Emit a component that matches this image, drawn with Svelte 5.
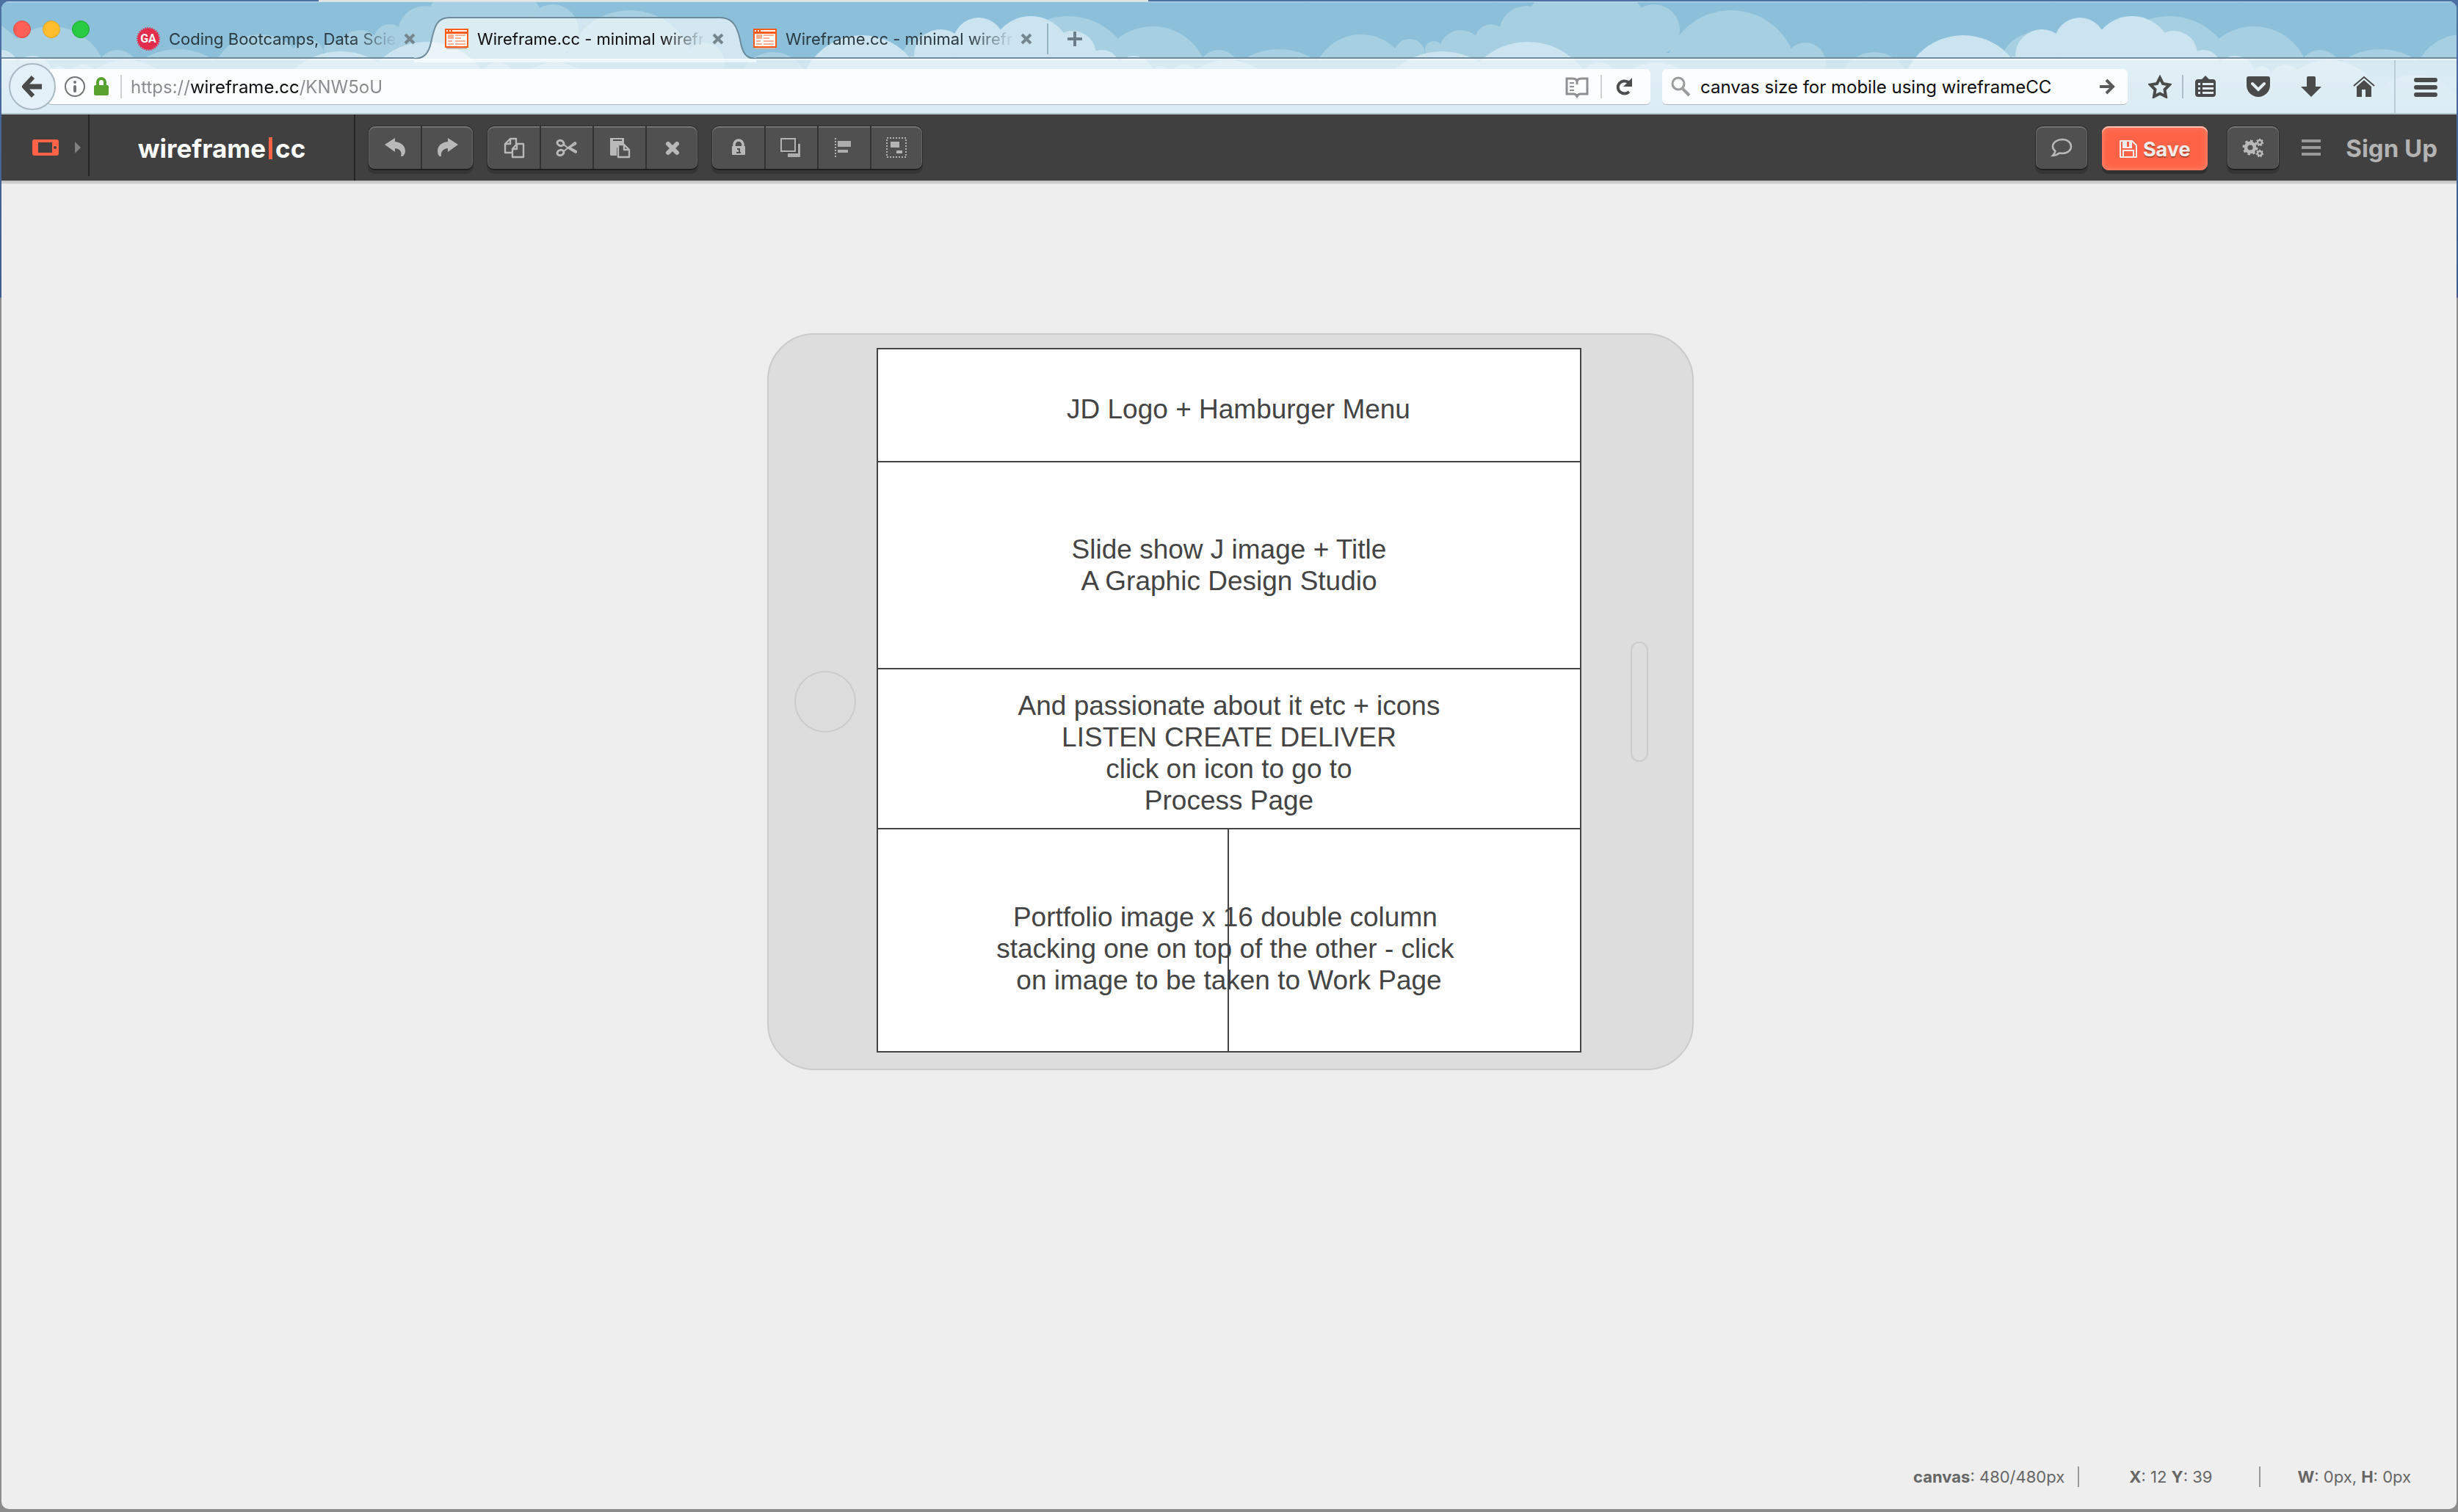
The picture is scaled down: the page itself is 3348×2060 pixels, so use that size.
<script>
  const tabs = [
    { title: 'Coding Bootcamps, Data Scie', icon: 'ga', active: false },
    { title: 'Wireframe.cc - minimal wirefr', icon: 'wire', active: true },
    { title: 'Wireframe.cc - minimal wirefr', icon: 'wire', active: false }
  ];

  // The sky repeats every 1500 units: [cx, cy, r] for each puff.
  const skyOffsets = [-3000, -1500, 0, 1500];
  const backPuffs = [
    [1742, 156, 91], [1854, 111, 66], [1920, 72, 21], [1953, 66, 12],
    [1990, 69, 30], [2031, 53, 22], [2079, 43, 37], [2160, 58, 90],
    [2253, 39, 35], [2358, 102, 90], [2459, 84, 28], [2553, 117, 48],
    [2770, 88, 45], [2955, 110, 90], [3070, 110, 76], [3160, 94, 28]
  ];
  const frontPuffs = [
    [1964, 163, 95], [2081, 148, 93], [2178, 108, 25], [2256, 143, 60],
    [2674, 131, 85], [2781, 74, 36], [2833, 57, 35], [2904, 75, 55],
    [2961, 72, 32], [3001, 90, 24], [3044, 102, 28], [3081, 100, 12],
    [3113, 108, 22], [3172, 158, 78], [3290, 170, 70]
  ];

  const editGroups = [
    [['undo', 'Undo'], ['redo', 'Redo']],
    [['copy', 'Copy'], ['cut', 'Cut'], ['paste', 'Paste'], ['remove', 'Delete']],
    [['lock', 'Lock'], ['layers', 'Arrange'], ['align', 'Align'], ['group', 'Group']]
  ];

  let search = $state('canvas size for mobile using wireframeCC');
  let address = $state('https://wireframe.cc/KNW5oU');

  // The host part of the address is darker than the rest: find where it starts and ends.
  const pen = document.createElement('canvas').getContext('2d');
  pen.font = '24px Inter, "Liberation Sans", sans-serif';
  const host = $derived.by(() => {
    const scheme = address.match(/^\w+:\/\//)?.[0] ?? '';
    const full = scheme + address.slice(scheme.length).split('/')[0];
    return { from: Math.round(pen.measureText(scheme).width), to: Math.round(pen.measureText(full).width) };
  });
</script>

{#snippet toolIcon(name)}
  <svg class="tool-icon" viewBox="0 0 32 32" aria-hidden="true">
    {#if name === 'undo'}
      <path d="M2 12 16 3v5c9 1 14 6 14 13 0 3-2 6-4 7h-2c2-6-1-10-8-11v5z" fill="#b9b9b9" />
    {:else if name === 'redo'}
      <path d="M30 12 16 3v5C7 9 2 14 2 21c0 3 1 6 3 7h2c-1-6 2-10 9-11v5z" fill="#b9b9b9" />
    {:else if name === 'copy'}
      <g fill="none" stroke="#b9b9b9" stroke-width="2.4" stroke-linejoin="round">
        <path d="M13 23H4V11l7-7h8v7M11 4v7H4" />
        <path d="M14 29V18l6-7h9v18zM20 11v7h-6" fill="#505050" />
      </g>
    {:else if name === 'cut'}
      <g fill="none" stroke="#b9b9b9">
        <ellipse cx="7.500" cy="10" rx="4.500" ry="3.500" stroke-width="3" transform="rotate(20 7.500 10)" />
        <ellipse cx="7.500" cy="23" rx="4.500" ry="3.500" stroke-width="3" transform="rotate(-20 7.500 23)" />
        <path d="m12 12 6 5 10 6c2-1 1-2 0-2.500L18 15M12 21l5-4L27 9c2 1 2 2 0 3l-9 5" stroke-width="2" stroke-linejoin="round" />
      </g>
    {:else if name === 'paste'}
      <path d="M3 3h19v8l-7 2-3 4v10H4l-1-1z" fill="#b9b9b9" />
      <path d="M7 6h12" stroke="#505050" stroke-width="2" />
      <path d="M14 29V12h8l7 7v10zM22 12v7h7" fill="#505050" stroke="#b9b9b9" stroke-width="2.400" stroke-linejoin="round" />
    {:else if name === 'remove'}
      <path d="m10 11 12 12M22 11 10 23" stroke="#b9b9b9" stroke-width="6" stroke-linecap="round" />
    {:else if name === 'lock'}
      <path d="M10 16v-4a6 6 0 0 1 12 0v4" fill="none" stroke="#b9b9b9" stroke-width="3.500" />
      <rect x="7" y="14" width="18" height="12" rx="1" fill="#b9b9b9" />
      <path d="M14 18h3v5M13 23h6" stroke="#505050" stroke-width="2" fill="none" />
    {:else if name === 'layers'}
      <path d="M11 21h17v8H11zM20 11h8v18h-8z" fill="#adadad" />
      <path d="M5 5h20v19H5z" fill="#454545" />
      <path d="M2 4h19v17H2z" fill="#505050" stroke="#b3b3b3" stroke-width="2" />
    {:else if name === 'align'}
      <path d="M4 3v27" stroke="#b3b3b3" stroke-width="2" stroke-dasharray="2 2" />
      <path d="M7 7h18v8H7zM7 19h14v4H7z" fill="#adadad" />
    {:else if name === 'group'}
      <path d="M2 3h26v26H2z" fill="none" stroke="#b3b3b3" stroke-width="2" stroke-dasharray="2 2" />
      <path d="M7 8h12v8H7zM15 20h8v4h-8z" fill="#b3b3b3" />
    {/if}
  </svg>
{/snippet}

{#snippet gear(x, y, r, teeth)}
  <circle cx={x} cy={y} {r} fill="none" stroke="#b9b9b9" stroke-width={r * 0.8} />
  <circle cx={x} cy={y} r={r * 1.5} fill="none" stroke="#b9b9b9" stroke-width={r * 0.5} pathLength={teeth * 2} stroke-dasharray="1 1" />
{/snippet}

<div class="desktop">
  <div class="window">
    <header class="chrome">
      <svg class="sky" aria-hidden="true">
        <defs>
          <linearGradient id="haze" x1="0" y1="0" x2="0" y2="1">
            <stop offset="0" stop-color="#b9d9e8" stop-opacity=".3" />
            <stop offset=".6" stop-color="#b9d9e8" stop-opacity=".9" />
            <stop offset="1" stop-color="#b9d9e8" />
          </linearGradient>
        </defs>
        {#each skyOffsets as dx}
          <g transform="translate({dx - 2} 0)" fill="#a7cfe2">
            {#each backPuffs as [cx, cy, r]}<circle {cx} {cy} {r} />{/each}
            <rect x="1980" y="70" width="480" height="90" />
          </g>
        {/each}
        {#each skyOffsets as dx}
          <g transform="translate({dx - 2} 0)" fill="#cbe4f0">
            {#each frontPuffs as [cx, cy, r]}<circle {cx} {cy} {r} />{/each}
            <rect x="2740" y="75" width="250" height="85" />
            <rect x="2980" y="106" width="200" height="60" />
          </g>
        {/each}
        <rect y="78" width="100%" height="76" fill="url(#haze)" />
      </svg>

      <nav class="tabstrip" aria-label="Tabs">
        <div class="lights">
          <button class="light close" aria-label="Close window"></button>
          <button class="light min" aria-label="Minimize window"></button>
          <button class="light max" aria-label="Zoom window"></button>
        </div>
        {#each tabs as tab}
          <div class="tab" class:active={tab.active}>
            {#if tab.active}
              <svg class="tab-shape" viewBox="0 0 466 62" aria-hidden="true">
                <path d="M0 58c14 0 20-8 23-22C28 12 32 2 48 2h369c17 0 23 12 27 30 3 18 8 26 22 26v4H0z" fill="#fff" fill-opacity=".6" />
                <path d="M0 57c14 0 20-8 23-22C28 11 32 1 48 1h369c17 0 23 12 27 30 3 18 8 26 22 26" fill="none" stroke="#6d8b9b" stroke-width="2" />
              </svg>
            {/if}
            {#if tab.icon === 'ga'}
              <span class="ga">
                <svg viewBox="0 0 32 32" aria-hidden="true">
                  <circle cx="16" cy="16" r="14.500" fill="#e62c4c" />
                  <circle cx="16" cy="16" r="15" fill="none" stroke="#e62c4c" stroke-width="2" pathLength="60" stroke-dasharray="1 1" />
                </svg>
                <b>GA</b>
              </span>
            {:else}
              <svg class="favicon" viewBox="0 0 32 32" aria-hidden="true">
                <path d="M2 28h28v2H2z" fill="#c9b9b3" />
                <path d="M0 2h32v26H0z" fill="#fb5a17" />
                <path d="M2 4h2v2H2zM6 4h2v2H6zM10 4h20v2H10zM2 9h28v17H2z" fill="#fff" />
                <path d="M4 10h8v6H4zM14 10h14v2H14zM14 14h8v2h-8zM4 18h6v2H4zM14 18h14v2H14zM4 22h8v2H4zM14 22h14v2H14z" fill="#fbb191" />
              </svg>
            {/if}
            <span class="title">{tab.title}</span>
            <button class="x" aria-label="Close tab">
              <svg viewBox="0 0 16 16" aria-hidden="true"><path d="m2 2 12 12M14 2 2 14" stroke="#76868f" stroke-width="4" /></svg>
            </button>
          </div>
        {/each}
        <span class="tab-rule"></span>
        <button class="plus" aria-label="New tab">
          <svg viewBox="0 0 20 20" aria-hidden="true"><path d="M10 0v20M0 10h20" stroke="#6b7f8a" stroke-width="4" /></svg>
        </button>
      </nav>

      <div class="navbar">
        <button class="back" aria-label="Back">
          <svg viewBox="0 0 32 32" aria-hidden="true"><path d="M4 16h25" stroke="#4a4a4a" stroke-width="7" /><path d="M17 3 5 16l12 13" fill="none" stroke="#4a4a4a" stroke-width="6" stroke-linejoin="round" /></svg>
        </button>
        <div class="field url">
          <svg class="i28" viewBox="0 0 28 28" aria-hidden="true">
            <circle cx="14" cy="14" r="13" fill="none" stroke="#737373" stroke-width="2" />
            <circle cx="14" cy="8" r="2" fill="#737373" /><rect x="12" y="12" width="4" height="10" rx="2" fill="#737373" />
          </svg>
          <svg class="padlock" viewBox="0 0 20 26" aria-hidden="true">
            <path d="M5 12V7a5 5 0 0 1 10 0v5" fill="none" stroke="#58a12f" stroke-width="4" /><rect y="11" width="20" height="14" rx="2" fill="#58a12f" />
          </svg>
          <span class="rule"></span>
          <input class="address" type="text" aria-label="Address" bind:value={address} style:--from="{host.from}px" style:--to="{host.to}px" />
          <button class="bare" aria-label="Reader view">
            <svg class="i32" viewBox="0 0 32 32" aria-hidden="true">
              <path d="M2 5h8c3 0 5 1 6 3 1-2 3-3 6-3h8v21h-9c-3 0-4 1-5 3-1-2-2-3-5-3H2z" fill="none" stroke="#8f8f91" stroke-width="3" />
              <path d="M16 8v5M16 26v4" stroke="#8f8f91" stroke-width="3" /><path d="M6 11h6M6 16h6M6 21h6" stroke="#8f8f91" stroke-width="2" />
            </svg>
          </button>
          <span class="rule"></span>
          <button class="bare" aria-label="Reload">
            <svg class="i24" viewBox="0 0 24 24" aria-hidden="true">
              <path d="M19 19a9 8.500 0 1 1-1-13" fill="none" stroke="#4d4d4d" stroke-width="4" /><path d="M23 0v12H11z" fill="#4d4d4d" />
            </svg>
          </button>
        </div>
        <label class="field search">
          <svg class="i28" viewBox="0 0 28 28" aria-hidden="true">
            <circle cx="10" cy="10" r="8" fill="none" stroke="#9b9b9b" stroke-width="3" /><path d="m16 17 9 9" stroke="#9b9b9b" stroke-width="4" />
          </svg>
          <input type="text" aria-label="Search" bind:value={search} />
          <button class="bare" aria-label="Go">
            <svg class="i24" viewBox="0 0 24 24" aria-hidden="true"><path d="M2 12h18M11 3l9 9-9 9" fill="none" stroke="#5a5a5a" stroke-width="4" /></svg>
          </button>
        </label>
        <div class="actions">
          <button class="bare" aria-label="Bookmark this page">
            <svg class="i32" viewBox="0 0 32 32" aria-hidden="true"><path d="m16 4 4 8 9 1.500-6.500 6.500 1.500 9.500-8-4-8 4 1.500-9.500L3 13.500 12 12z" fill="none" stroke="#4a4a4a" stroke-width="4" /></svg>
          </button>
          <span class="rule"></span>
          <button class="bare" aria-label="Bookmarks">
            <svg class="i32" viewBox="0 0 32 32" aria-hidden="true">
              <path d="m16 1 5 5h5q4 0 4 4v16q0 4-4 4H6q-4 0-4-4V10q0-4 4-4h5z" fill="#4a4a4a" />
              <path d="M12 11h15v3H12zM12 17h15v3H12zM12 23h15v3H12zM6 11h3v3H6zM6 17h3v3H6zM6 23h3v3H6z" fill="#e4eff5" />
            </svg>
          </button>
          <button class="bare" aria-label="Pocket">
            <svg class="i32" viewBox="0 0 32 32" aria-hidden="true">
              <path d="M0 5q0-3 3-3h26q3 0 3 3v9a16 16 0 0 1-32 0z" fill="#4a4a4a" /><path d="m8 12 8 8 8-8" fill="none" stroke="#e4eff5" stroke-width="4" stroke-linecap="round" />
            </svg>
          </button>
          <button class="bare" aria-label="Downloads">
            <svg class="i32" viewBox="0 0 32 32" aria-hidden="true"><path d="M10 4q0-2 2-2h8q2 0 2 2v12h8L16 30 2 16h8z" fill="#4a4a4a" /></svg>
          </button>
          <button class="bare" aria-label="Home">
            <svg class="i32" viewBox="0 0 32 32" aria-hidden="true">
              <path d="M2 15 16 3l14 12" fill="none" stroke="#4a4a4a" stroke-width="2" /><path d="M16 7 6 16v14h7V20h5v10h8V16z" fill="#4a4a4a" />
            </svg>
          </button>
          <span class="tall-rule"></span>
          <button class="bare" aria-label="Open menu">
            <svg class="i32" viewBox="0 0 32 32" aria-hidden="true"><path d="M3 7h26M3 17h26M3 27h26" stroke="#4a4a4a" stroke-width="6" stroke-linecap="round" /></svg>
          </button>
        </div>
      </div>
    </header>

    <div class="appbar">
      <button class="device-pick" aria-label="Choose device">
        <svg class="tablet" viewBox="0 0 36 22" aria-hidden="true">
          <rect width="36" height="22" rx="3" fill="#ff6347" /><rect x="8" y="4" width="19" height="14" fill="#404040" /><circle cx="31" cy="11" r="2" fill="#404040" />
        </svg>
        <svg class="caret" viewBox="0 0 8 16" aria-hidden="true"><path d="m0 0 8 8-8 8z" fill="#808080" /></svg>
      </button>
      <a class="logo" href="#home">wireframe<span class="bar"></span>cc</a>
      <div class="groups">
        {#each editGroups as group}
          <div class="group">
            {#each group as [name, label]}
              <button aria-label={label}>{@render toolIcon(name)}</button>
            {/each}
          </div>
        {/each}
      </div>
      <div class="right">
        <div class="group">
          <button aria-label="Comments">
            <svg class="tool-icon" viewBox="0 0 32 32" aria-hidden="true"><path d="M17 5c7 0 12 4 12 9.500S24 24 17 24l-4-.500C10 26 8 27 4 27c2-2 3-3 3.500-6C5 19 4 17 4 14.500 4 9 10 5 17 5z" fill="none" stroke="#b9b9b9" stroke-width="2.500" /></svg>
          </button>
        </div>
        <button class="save">
          <svg viewBox="0 0 24 24" aria-hidden="true">
            <path d="M1 1h16l6 6v16H1z" fill="none" stroke="#f3eeed" stroke-width="2" stroke-linejoin="round" />
            <path d="M5 1v9h11V1M5 23v-9h14v9" fill="none" stroke="#f3eeed" stroke-width="2" /><path d="M6 2h4v7H6zM13 2h2v7h-2z" fill="#f3eeed" />
          </svg>
          Save
        </button>
        <div class="group gears">
          <button aria-label="Settings">
            <svg class="tool-icon" viewBox="0 0 32 32" aria-hidden="true">
              {@render gear(12, 16, 6, 8)}
              {@render gear(25, 9, 3, 7)}
              {@render gear(25, 24, 3, 7)}
            </svg>
          </button>
        </div>
        <button class="bare" aria-label="Menu">
          <svg class="lines" viewBox="0 0 26 24" aria-hidden="true"><path d="M0 3h26M0 12h26M0 21h26" stroke="#999" stroke-width="4" /></svg>
        </button>
        <a class="signup" href="#signup">Sign Up</a>
      </div>
    </div>

    <main class="stage">
      <div class="phone">
        <span class="home-key"></span>
        <div class="screen">
          <section class="row head"><p>JD Logo + Hamburger Menu</p></section>
          <section class="row slides"><p>Slide show J image + Title<br />A Graphic Design Studio</p></section>
          <section class="row process"><p>And passionate about it etc + icons<br />LISTEN CREATE DELIVER<br />click on icon to go to<br />Process Page</p></section>
          <section class="row work">
            <div class="half left"></div>
            <div class="half"></div>
            <p>Portfolio image x 16 double column&nbsp;<br />stacking one on top of the other - click&nbsp;<br />on image to be taken to Work Page</p>
          </section>
        </div>
        <span class="speaker"></span>
      </div>
    </main>

    <footer class="status">
      <span class="size"><b>canvas</b>: 480/480px</span>
      <span class="pos"><b>X</b>: 12 <b>Y</b>: 39</span>
      <span class="dims"><b>W</b>: 0px, <b>H</b>: 0px</span>
    </footer>
  </div>
</div>

<style>
  :global(body) { margin: 0; }
  .desktop, .desktop * { box-sizing: border-box; }
  .desktop {
    min-height: 100vh;
    padding: 2px 2px 4px;
    display: flex;
    font-family: Inter, 'Liberation Sans', sans-serif;
    background:
      linear-gradient(#e4e4e0, #e4e4e0) 434px 0 / 1130px 2px no-repeat,
      linear-gradient(#4d71a5, #3f5a8e 405px, #8c8c8c 406px, #8c8c8c);
  }
  button { border: 0; background: none; padding: 0; margin: 0; font: inherit; color: inherit; display: flex; align-items: center; justify-content: center; }
  svg { display: block; flex: none; }
  a { text-decoration: none; }

  .window { flex: 1; min-width: 0; display: flex; flex-direction: column; border-radius: 10px; overflow: hidden; background: #eee; }

  .chrome { position: relative; background: #8cc0da; }
  .sky { position: absolute; inset: 0; width: 100%; height: 100%; }

  .tabstrip { position: relative; display: flex; align-items: center; height: 78px; padding-top: 22px; border-top: 1px solid #c4dfec; }
  .tabstrip::after { content: ''; position: absolute; left: 0; right: 0; bottom: 0; height: 2px; background: linear-gradient(90deg, #6d8b9b 562px, transparent 562px, transparent 1028px, #6d8b9b 1028px); }
  .lights { display: flex; gap: 16px; width: 164px; padding-left: 16px; align-self: flex-start; margin-top: 3px; }
  .light { width: 24px; height: 24px; border-radius: 50%; border: 1px solid; }
  .close { background: #ff5f57; border-color: #e2463f; }
  .min { background: #ffbd2e; border-color: #dfa023; }
  .max { background: #28ca41; border-color: #1aab29; }
  .tab { position: relative; display: flex; align-items: center; gap: 12px; width: 420px; padding: 0 20px; height: 56px; color: #2b3940; font-size: 22px; }
  .tab.active { color: #0c0c0d; }
  .tab-shape { position: absolute; left: -22px; top: -2px; width: 466px; height: 62px; }
  .favicon, .ga, .ga svg { position: relative; width: 32px; height: 32px; flex: none; }
  .ga b { position: absolute; inset: 0; text-align: center; color: #fff; font: bold 16px/32px Roboto, sans-serif; }
  .title { position: relative; width: 308px; white-space: nowrap; line-height: 30px; -webkit-mask-image: linear-gradient(90deg, #000 250px, transparent 312px); mask-image: linear-gradient(90deg, #000 250px, transparent 312px); }
  .x { position: relative; }
  .x svg { width: 16px; height: 16px; }
  .tab-rule { width: 2px; height: 42px; background: #94b4c4; }
  .plus { margin-left: 26px; }
  .plus svg { width: 20px; height: 20px; }

  .navbar { position: relative; display: flex; align-items: center; height: 76px; padding-left: 10px; background: rgba(255, 255, 255, .5); border-top: 2px solid rgba(255, 255, 255, .5); border-bottom: 2px solid #b3c5cf; }
  .back { position: relative; z-index: 1; width: 64px; height: 64px; border-radius: 50%; border: 2px solid #a9b9c2; background: #e3f0f7; flex: none; }
  .back svg { width: 32px; height: 32px; }
  .field { display: flex; align-items: center; height: 49px; background: #fcfdfe; border-bottom: 1px solid #a9b9c2; border-radius: 6px; }
  .field input { border: 0; outline: 0; padding: 2px 0 0; background: none; font: 24px Inter, 'Liberation Sans', sans-serif; color: #0c0c0d; flex: 1; min-width: 0; height: 40px; }
  .url { flex: 1; min-width: 0; margin-left: -12px; padding: 0 24px; gap: 12px; }
  .field .address { color: transparent; background: linear-gradient(90deg, #8a8a8c var(--from), #0c0c0d var(--from), #0c0c0d var(--to), #8a8a8c var(--to)); -webkit-background-clip: text; background-clip: text; }
  .search { width: 634px; margin-left: 16px; padding: 0 16px 0 12px; gap: 12px; }
  .rule { width: 2px; height: 32px; background: #cdd1d4; flex: none; }
  .url .rule { margin-left: 4px; }
  .url .rule + .bare { margin-left: 6px; }
  .actions { display: flex; align-items: center; align-self: stretch; padding: 0 26px 0 28px; gap: 40px; }
  .actions .rule { background: #aebdc6; margin: 0 -26px; }
  .tall-rule { width: 2px; align-self: stretch; background: #b9cbd5; margin: 0 -15px; }
  .i32 { width: 32px; height: 32px; }
  .i28 { width: 28px; height: 28px; }
  .i24 { width: 24px; height: 24px; }
  .padlock { width: 20px; height: 26px; }

  .appbar { display: flex; height: 90px; background: #404040; }
  .device-pick { width: 120px; height: 84px; gap: 22px; padding: 6px 0 0 42px; border-right: 2px solid #252525; justify-content: flex-start; }
  .tablet { width: 36px; height: 22px; }
  .caret { width: 8px; height: 16px; }
  .logo { width: 362px; display: flex; align-items: center; justify-content: center; padding-top: 2px; border-right: 2px solid #252525; color: #fff; font-size: 35px; font-weight: 700; }
  .bar { width: 5px; height: 30px; margin: 0 4px; background: #ff6347; }
  .groups { display: flex; gap: 18px; padding: 15px 0 0 17px; align-items: flex-start; }
  .group { display: flex; height: 61px; border: 1px solid #2c2c2c; border-bottom: 2px solid #1f1f1f; border-radius: 10px; background: #505050; box-shadow: 0 5px 0 #353535, inset 0 2px 0 #747474, inset 1px 0 0 #666, inset -1px 0 0 #666; }
  .group button { width: 72px; }
  .group button:first-child { width: 71px; }
  .group button:last-child { width: 71px; }
  .group button:only-child { width: 70px; }
  .group button + button { border-left: 2px solid #323232; }
  .tool-icon { width: 32px; height: 32px; }
  .right { margin-left: auto; display: flex; align-items: center; padding: 0 26px 0 0; }
  .save { width: 144px; height: 60px; margin: 2px 26px 0 19px; padding-top: 2px; gap: 8px; border-radius: 9px; background: #ff6347; color: #f3eeed; font-size: 27px; font-weight: 700; box-shadow: 0 5px 0 #303030, inset 0 2px 0 #ffc0b2, inset 0 0 10px #ff8f7a; text-shadow: 0 2px 0 #b5452f; }
  .save svg { width: 24px; height: 24px; }
  .right .bare { margin: 0 34px 0 30px; }
  .lines { width: 26px; height: 24px; }
  .signup { padding-top: 2px; color: #b3b3b3; font-size: 33px; font-weight: 700; }

  .stage { flex: 1; padding: 208px 24px 40px 28px; background: linear-gradient(#bebebe, #d4d4d4 4px, #eee 5px); display: flex; justify-content: center; align-items: flex-start; }
  .phone { width: 100%; max-width: 1262px; display: flex; align-items: center; padding: 18px 60px 18px 35px; border: 2px solid #cbcbcb; border-radius: 64px; background: #ddd; }
  .home-key { width: 84px; height: 84px; border: 2px solid #cbcbcb; border-radius: 50%; margin-right: 28px; flex: none; }
  .speaker { width: 24px; height: 164px; border: 2px solid #cbcbcb; border-radius: 12px; margin-left: 67px; flex: none; }
  .screen { flex: 1; min-width: 0; margin-bottom: 4px; border: 2px solid #444; background: #fff; color: #444; font: 37px/43px 'Liberation Sans', Arial, sans-serif; text-align: center; }
  .row { display: flex; align-items: center; justify-content: center; border-bottom: 2px solid #444; }
  .row p { margin: 0; }
  .head { min-height: 154px; padding: 10px 0 0 26px; }
  .slides { min-height: 282px; }
  .process { min-height: 218px; padding-top: 12px; }
  .work { display: grid; grid-template-columns: 1fr 1fr; min-height: 302px; border-bottom: 0; align-items: stretch; justify-content: stretch; }
  .half { grid-row: 1; grid-column: 2; }
  .left { grid-column: 1; border-right: 2px solid #444; }
  .work p { grid-row: 1; grid-column: 1 / -1; align-self: center; padding-top: 22px; }

  .status { display: flex; align-items: center; justify-content: flex-end; height: 88px; padding-right: 62px; color: #666; font-size: 22px; line-height: 28px; }
  .size { padding-right: 18px; border-right: 2px solid #999; }
  .pos { padding: 0 64px 0 68px; border-right: 2px solid #999; }
  .dims { padding-left: 50px; }
</style>
